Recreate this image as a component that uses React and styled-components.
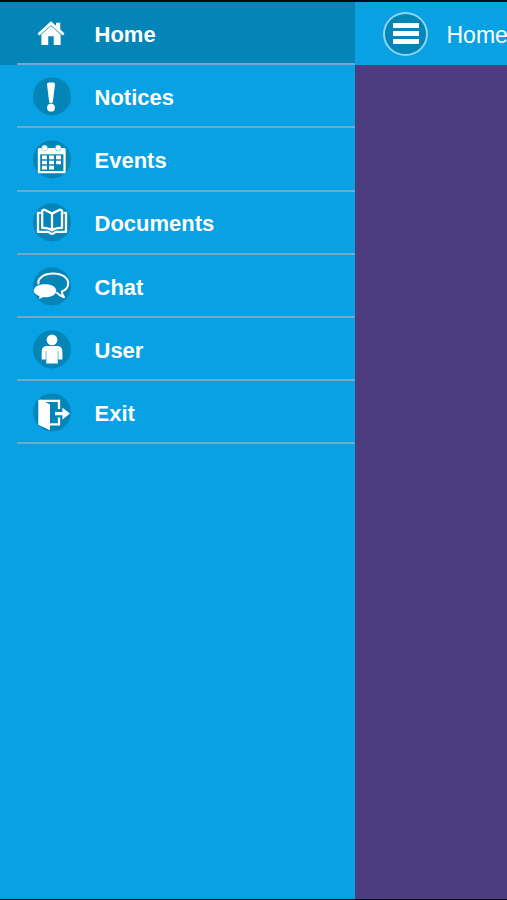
import React, { useState } from "react";
import styled, { createGlobalStyle } from "styled-components";

const GlobalStyle = createGlobalStyle`
  * {
    box-sizing: border-box;
  }
  body {
    margin: 0;
    background: #020a14;
    overflow: hidden;
  }
`

const Screen = styled.div`
  display: flex;
  width: 507px;
  height: 900px;
  padding: 2px 0 1px;
  background: #020a14;
  color: #fff;
  font-family: "Liberation Sans", Arial, sans-serif;
  overflow: hidden;
`

const Sidebar = styled.nav`
  flex: 0 0 355px;
  background: #07a1e4;
`

const MenuItem = styled.a`
  display: flex;
  height: 63.2px;
  padding-left: 17px;
  background: ${props => (props.$active ? "#0485b8" : "transparent")};
  color: #fff;
  cursor: pointer;
`

const ItemContent = styled.div`
  display: flex;
  flex: 1;
  align-items: center;
  gap: 22.5px;
  padding: 2.6px 0 0 15px;
  border-bottom: 2px solid #6fabc4;
`

const ItemLabel = styled.span`
  padding-top: 2px;
  font-size: 22px;
  font-weight: bold;
  line-height: 26px;
`

const Icon = styled.svg`
  flex: none;
  width: 40px;
  height: 40px;
  overflow: visible;
`

const Page = styled.main`
  flex: 1;
  min-width: 0;
  background: #4c3c80;
`

const Header = styled.header`
  display: flex;
  align-items: center;
  gap: 18.5px;
  height: 63px;
  padding-left: 28px;
  background: #07a1e4;
`

const MenuButton = styled.button`
  display: flex;
  flex: none;
  flex-direction: column;
  align-items: center;
  justify-content: center;
  gap: 2.5px;
  width: 45px;
  height: 44px;
  padding: 0 0 0 1px;
  border: 2px solid #8cd5f3;
  border-radius: 50%;
  background: #0485b8;
`

const Bar = styled.span`
  width: 26px;
  height: 5.2px;
  background: #fff;
`

const Title = styled.h1`
  margin: 0;
  padding-top: 2px;
  font-size: 23px;
  font-weight: 300;
  line-height: 28px;
  white-space: nowrap;
`

const disc = <circle cx="20" cy="19.4" r="19" fill="#0485b8" />

const icons = {
  home: (
    <g fill="#fff">
      <path d="M19 7.2 24 11.7V8.7H28.2V15.3L32.5 19.4 30.8 21.5 19 11.2 7.3 21.5 5.5 19.4Z" />
      <path d="M19 12 28.6 20.6V30.9H21.7V22.3H16.2V30.9H9.4V20.6Z" />
    </g>
  ),
  notices: (
    <g fill="#fff">
      <path d="M15 7.3Q15 5.6 16.8 5.6H21.2Q23 5.6 23 7.3L20.8 25Q20.6 26.2 19 26.2T17.2 25Z" />
      <circle cx="19" cy="30.7" r="3.9" />
    </g>
  ),
  events: (
    <g>
      <rect x="5.8" y="8" width="27.9" height="25.3" rx="1.5" fill="#fff" />
      <rect x="8.2" y="14.3" width="23.2" height="16.8" fill="#0485b8" />
      <g fill="#fff" stroke="#4ba9ce" strokeWidth="0.5">
        <circle cx="12.6" cy="8" r="2.9" />
        <circle cx="26.2" cy="8" r="2.9" />
      </g>
      <path
        d="M10 15.6H15V19.2H10ZM17 15.6H22V19.2H17ZM24 15.6H29V19.2H24ZM10 20.7H15V24.3H10ZM17 20.7H22V24.3H17ZM24 20.7H29V24.3H24ZM10 25.8H15V29.4H10ZM17 25.8H22V29.4H17Z"
        fill="#fff"
      />
    </g>
  ),
  documents: (
    <g fill="none" stroke="#fff" strokeWidth="2.3" strokeLinejoin="round">
      <path d="M20 10.6 12.4 6.7 10.2 7.5V24.9Q16.5 24.6 20 27.4Q23.5 24.6 30 24.9V7.5L27.8 6.7 20 10.6V27" />
      <path d="M8.8 9.8H6V28.9H16.6Q18 30.8 20 30.8T23.4 28.9H34V9.8H31.4" />
    </g>
  ),
  chat: (
    <g>
      <path
        d="M6.6 17.2C4.8 11 12.5 6.6 21.2 6.6C30.2 6.6 36.2 10.8 36.2 16.4C36.2 20 33.6 22.9 29.8 24.5Q30 27.5 32 30.2Q27.5 28.8 24.4 25.4"
        fill="none"
        stroke="#fff"
        strokeWidth="2"
        strokeLinejoin="round"
      />
      <path
        d="M13 17.2C19.5 17.2 24.3 19.9 24.3 23.7S19.5 30.2 13 30.2L11.2 30.1Q9.5 31.7 6.8 32.1Q8 30.4 7.3 29C4 27.9 1.8 26 1.8 23.7C1.8 19.9 6.5 17.2 13 17.2Z"
        fill="#fff"
      />
    </g>
  ),
  user: (
    <g>
      <circle cx="20" cy="9.9" r="5.4" fill="#fff" />
      <path
        d="M15 16H25Q30.4 16 30.4 21.5V29.5H25.8V33.6H14.3V29.5H9.7V21.5Q9.7 16 15 16Z"
        fill="#fff"
      />
      <path d="M14 21V30M26.1 21V30" stroke="#4ba9ce" strokeWidth="0.8" />
    </g>
  ),
  exit: (
    <g>
      <path
        d="M8 7.9H27V16M27 24.5V31.3H17"
        fill="none"
        stroke="#fff"
        strokeWidth="2.3"
      />
      <path d="M6.3 6.8 9 6.8 18 11.5V37.2L6.3 31.8Z" fill="#fff" />
      <path d="M23 19H30.4V14.8L38 20.6 30.4 26.4V22.2H23Z" fill="#fff" />
    </g>
  )
}

const menu = [
  { id: "home", label: "Home" },
  { id: "notices", label: "Notices" },
  { id: "events", label: "Events" },
  { id: "documents", label: "Documents" },
  { id: "chat", label: "Chat" },
  { id: "user", label: "User" },
  { id: "exit", label: "Exit" }
]

function App() {
  const [active, setActive] = useState("home");

  return (
    <Screen>
      <GlobalStyle />
      <Sidebar>
        {menu.map(item => {
          return (
            <MenuItem
              key={item.id}
              $active={item.id === active}
              onClick={() => setActive(item.id)}
            >
              <ItemContent>
                <Icon viewBox="0 0 40 40">
                  {disc}
                  {icons[item.id]}
                </Icon>
                <ItemLabel>{item.label}</ItemLabel>
              </ItemContent>
            </MenuItem>
          )
        })}
      </Sidebar>
      <Page>
        <Header>
          <MenuButton aria-label="Menu">
            <Bar />
            <Bar />
            <Bar />
          </MenuButton>
          <Title>Home</Title>
        </Header>
      </Page>
    </Screen>
  );
}

export default App;
